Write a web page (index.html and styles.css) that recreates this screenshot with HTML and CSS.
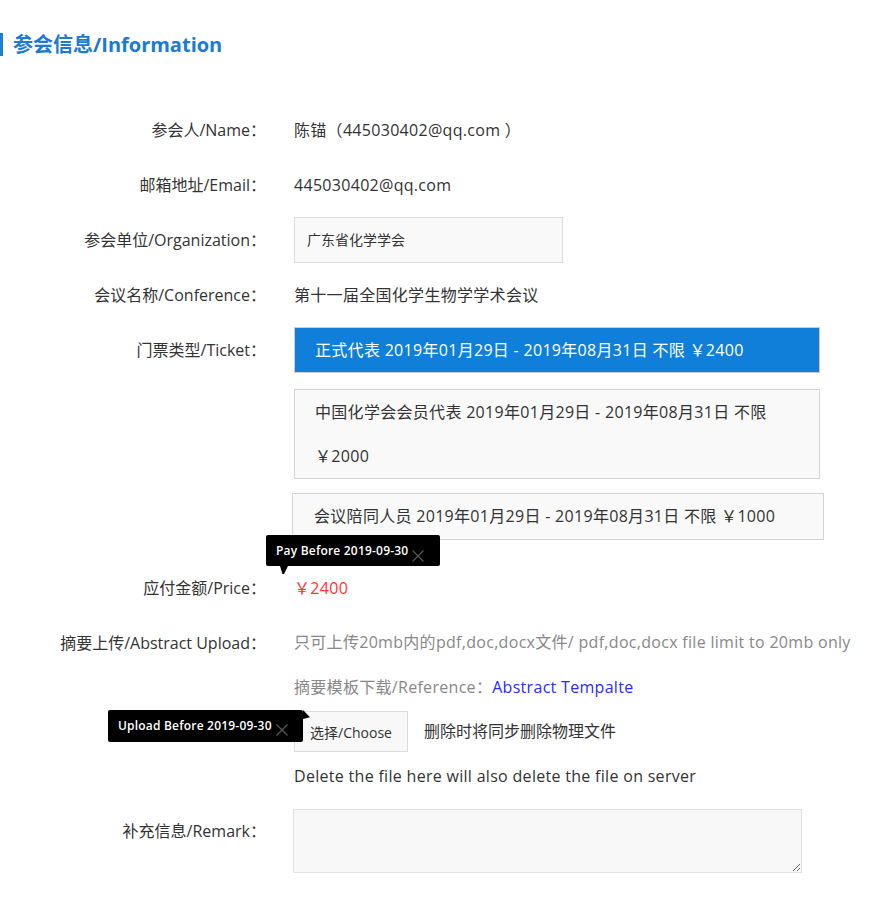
FILE: index.html
```html
<!DOCTYPE html>
<html lang="zh-CN">
<head>
<meta charset="utf-8">
<title>参会信息/Information</title>
<link rel="stylesheet" href="styles.css">
</head>
<body>
<h2 class="section-title">参会信息/Information</h2>
<div class="form">
  <div class="row">
    <div class="label">参会人/Name：</div>
    <div class="value">陈锚（445030402@qq.com ）</div>
  </div>
  <div class="row">
    <div class="label">邮箱地址/Email：</div>
    <div class="value">445030402@qq.com</div>
  </div>
  <div class="row">
    <div class="label">参会单位/Organization：</div>
    <div class="value"><div class="input">广东省化学学会</div></div>
  </div>
  <div class="row">
    <div class="label">会议名称/Conference：</div>
    <div class="value">第十一届全国化学生物学学术会议</div>
  </div>
  <div class="row">
    <div class="label">门票类型/Ticket：</div>
    <div class="value">
      <div class="ticket ticket-active">正式代表 2019年01月29日 - 2019年08月31日 不限 ￥2400</div>
      <div class="ticket ticket-two">中国化学会会员代表 2019年01月29日 - 2019年08月31日 不限<br>￥2000</div>
      <div class="ticket ticket-wide">会议陪同人员 2019年01月29日 - 2019年08月31日 不限 ￥1000</div>
    </div>
  </div>
  <div class="row">
    <div class="label">应付金额/Price：</div>
    <div class="value price">
      ￥2400
      <div class="tip tip-pay">Pay Before 2019-09-30<svg class="tip-close" width="12" height="12" viewBox="0 0 12 12"><path d="M0.5 0.5L11.5 11.5M11.5 0.5L0.5 11.5" stroke="#555" stroke-width="1.3" fill="none"/></svg></div>
    </div>
  </div>
  <div class="row">
    <div class="label">摘要上传/Abstract Upload：</div>
    <div class="value">
      <div class="hint">只可上传20mb内的pdf,doc,docx文件/ pdf,doc,docx file limit to 20mb only</div>
      <div class="hint">摘要模板下载/Reference：<a class="link" href="#">Abstract Tempalte</a></div>
      <div class="upload">
        <button class="choose" type="button">选择/Choose</button>
        <span class="upload-note">删除时将同步删除物理文件</span>
        <div class="tip tip-upload">Upload Before 2019-09-30<svg class="tip-close" width="12" height="12" viewBox="0 0 12 12"><path d="M0.5 0.5L11.5 11.5M11.5 0.5L0.5 11.5" stroke="#555" stroke-width="1.3" fill="none"/></svg></div>
      </div>
      <div class="delete-note">Delete the file here will also delete the file on server</div>
    </div>
  </div>
  <div class="row row-remark">
    <div class="label">补充信息/Remark：</div>
    <div class="value"><textarea class="remark"></textarea></div>
  </div>
</div>
</body>
</html>
```
FILE: styles.css
```css
* { box-sizing: border-box; }
body {
  margin: 0;
  background: #fff;
  color: #333;
  font-family: "Open Sans", "Noto Sans CJK SC", sans-serif;
  font-size: 16px;
}
.section-title {
  margin: 33px 0 0 0;
  height: 23px;
  line-height: 23px;
  border-left: 3px solid #1a7fd8;
  padding-left: 10px;
  font-size: 20px;
  font-weight: bold;
  color: #1a7ad4;
}
.form {
  margin-top: 51px;
  display: flex;
  flex-direction: column;
  gap: 9px;
}
.row {
  display: grid;
  grid-template-columns: 266px 1fr;
  column-gap: 28px;
  align-items: start;
}
.label {
  text-align: right;
  line-height: 46px;
  white-space: nowrap;
}
.value {
  line-height: 46px;
  position: relative;
  letter-spacing: 0.3px;
}
.input {
  width: 269px;
  height: 46px;
  border: 1px solid #ddd;
  background: #f9f9f9;
  font-size: 14px;
  line-height: 44px;
  padding-left: 12px;
  letter-spacing: 0;
}
.ticket {
  width: 526px;
  border: 1px solid #d4d4d4;
  background: #f9f9f9;
  line-height: 44px;
  padding: 0 20px;
  margin-bottom: 16px;
}
.ticket-active {
  background: #0f7fd9;
  border-color: #ccc;
  color: #fff;
}
.ticket-wide {
  width: 532px;
  margin-left: -2px;
  margin-top: -2px;
  line-height: 45px;
  padding-left: 21px;
}
.price { color: #ff3333; }
.tip {
  position: absolute;
  background: #000;
  color: #fff;
  font-size: 12px;
  font-weight: 600;
  line-height: 31px;
  height: 31px;
  padding-left: 10px;
  border-radius: 2px;
  white-space: nowrap;
  letter-spacing: 0.2px;
  font-family: "Open Sans", sans-serif;
}
.tip::after {
  content: "";
  position: absolute;
  background: #000;
}
.tip-close {
  position: absolute;
  top: 14px;
}
.tip-pay {
  left: -28px;
  top: -30px;
  width: 174px;
}
.tip-pay .tip-close { left: 146px; top: 15px; }
.tip-pay::after {
  left: 14px;
  top: 31px;
  width: 8px;
  height: 8px;
  clip-path: polygon(0 0, 100% 0, 50% 100%, 30% 100%);
}
.tip-upload {
  left: -186px;
  top: -1px;
  width: 195px;
  height: 32px;
  line-height: 32px;
}
.tip-upload .tip-close { left: 168px; top: 14px; }
.tip-upload::after {
  left: 195px;
  top: 0;
  width: 7px;
  height: 9px;
  clip-path: polygon(0 0, 100% 80%, 0 100%);
}
.hint {
  color: #888;
  line-height: 45px;
  white-space: nowrap;
}
.link {
  color: #2b2bff;
  text-decoration: none;
}
.upload {
  position: relative;
  margin-top: 1px;
  display: flex;
  align-items: center;
  gap: 16px;
  height: 41px;
  letter-spacing: 0;
}
.choose {
  height: 41px;
  width: 114px;
  border: 1px solid #ddd;
  background: #f8f8f8;
  font-family: "Open Sans", "Noto Sans CJK SC", sans-serif;
  font-size: 14px;
  color: #333;
  padding: 0;
}
.upload-note {
  font-size: 16px;
  line-height: 41px;
}
.delete-note {
  margin-top: 2px;
  line-height: 44px;
}
.row-remark { margin-top: 2px; }
.row-remark .label { line-height: 44px; }
.remark {
  display: block;
  margin-left: -1px;
  width: 509px;
  height: 64px;
  border: 1px solid #e2e2e2;
  background: #f8f8f8;
  resize: vertical;
}
```
